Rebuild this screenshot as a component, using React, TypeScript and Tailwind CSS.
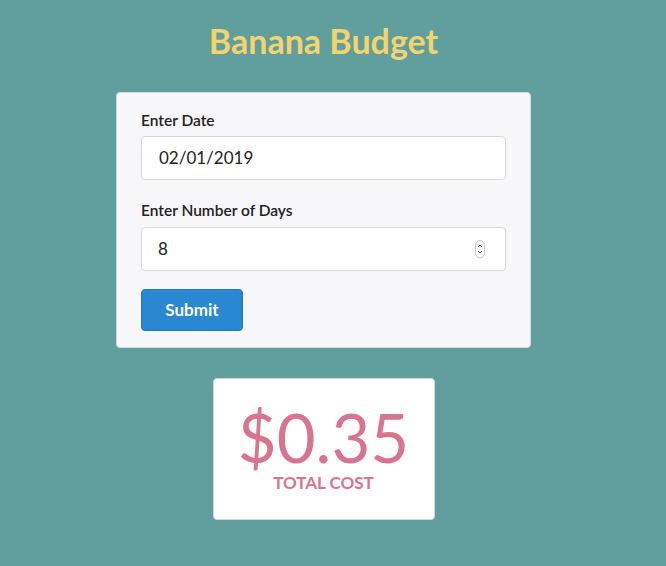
import React from "react";

function Spinner() {
  return (
    <svg width="10" height="18" viewBox="0 0 10 18" className="text-gray-500">
      <rect x="0.5" y="0.5" width="9" height="17" rx="4.5" fill="white" stroke="#c9c9c9" />
      <path d="M3 7l2-2 2 2" fill="none" stroke="currentColor" strokeWidth="1" />
      <path d="M3 11l2 2 2-2" fill="none" stroke="currentColor" strokeWidth="1" />
    </svg>
  );
}

export default function App() {
  return (
    <div className="min-h-[566px] bg-[#619e9e] pr-[19px] pt-[20px] font-['Lato','Liberation_Sans',sans-serif]">
      <div className="flex flex-col items-center">
        <h1 className="text-[34px] font-bold leading-[42px] text-[#f4d46c]">Banana Budget</h1>

        <form className="mt-[30px] w-[415px] rounded-[4px] border border-[#d6d6da] bg-[#f7f7f9] px-[24px] pt-[17px] pb-[16px]">
          <label className="block text-[15.5px] font-semibold leading-[20px] text-[#222]">Enter Date</label>
          <div className="mt-[6px] flex h-[44px] items-center rounded-[4px] border border-[#d9d9dc] bg-white px-[17px] text-[17px] text-[#222]">
            02/01/2019
          </div>

          <label className="mt-[20px] block text-[15.5px] font-semibold leading-[20px] text-[#222]">
            Enter Number of Days
          </label>
          <div className="mt-[7px] flex h-[44px] items-center justify-between rounded-[4px] border border-[#d9d9dc] bg-white pl-[16px] pr-[20px] text-[17px] text-[#222]">
            <span>8</span>
            <Spinner />
          </div>

          <button
            type="button"
            className="mt-[18px] h-[42px] w-[102px] rounded-[4px] border border-[#2476b8] bg-[#2a88d2] text-[17px] font-bold text-white"
          >
            Submit
          </button>
        </form>

        <div className="mt-[30px] flex h-[142px] w-[222px] flex-col items-center rounded-[4px] border border-[#d6d6da] bg-white pt-[28px]">
          <div className="text-[67px] font-normal leading-[60px] text-[#d9748f]">$0.35</div>
          <div className="mt-[6px] text-[17px] font-bold leading-[20px] text-[#d9748f]">TOTAL COST</div>
        </div>
      </div>
    </div>
  );
}
